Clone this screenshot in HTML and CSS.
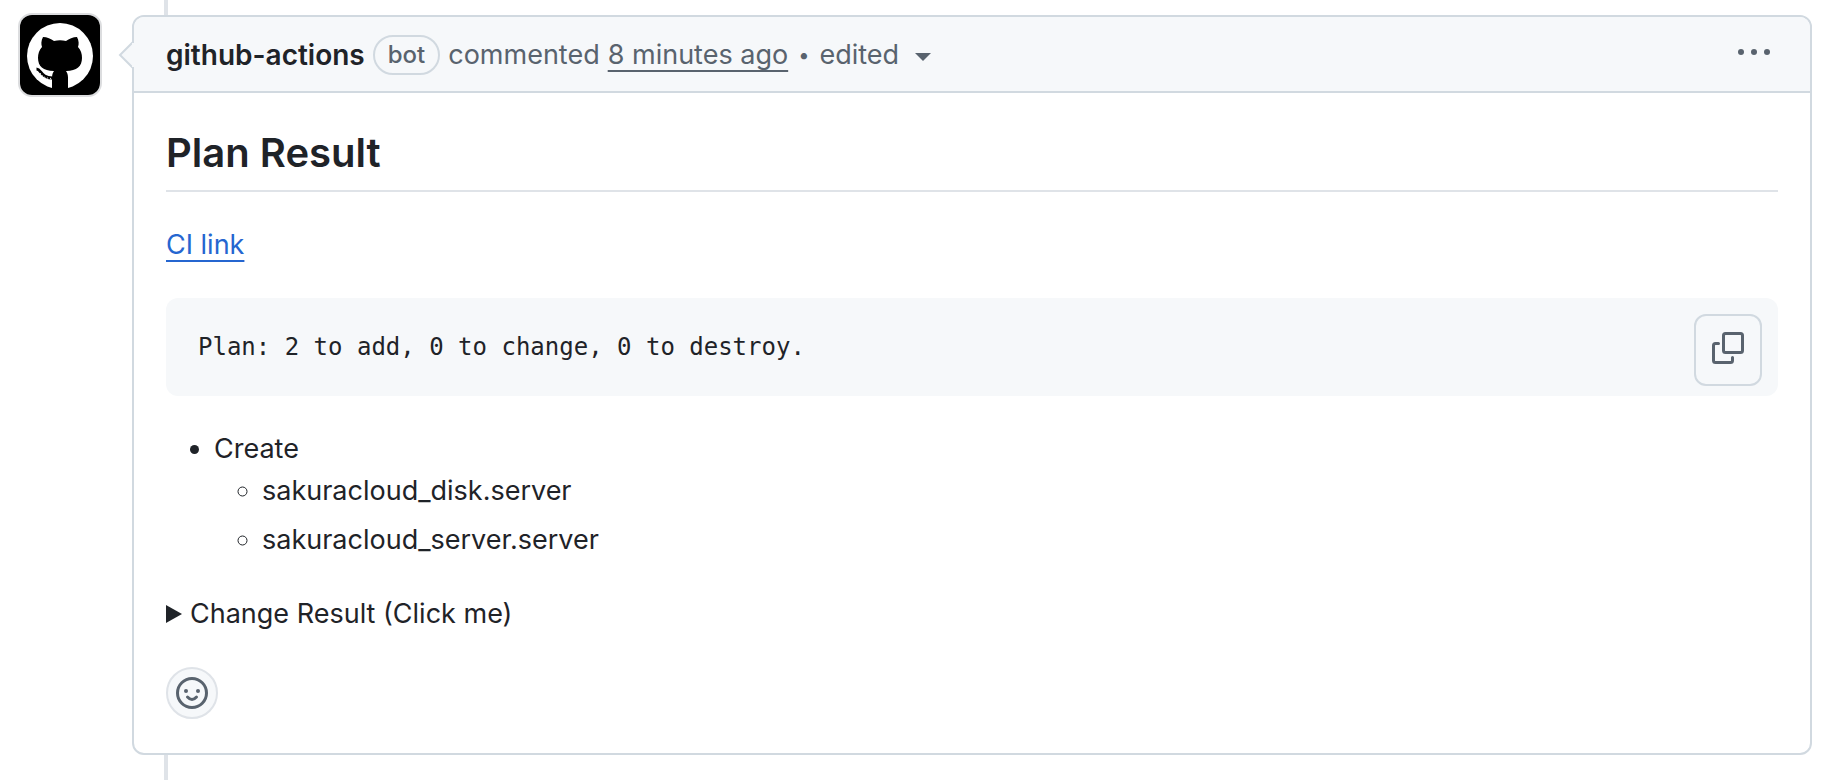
FILE: index.html
```html
<!DOCTYPE html>
<html lang="en">
<head>
<meta charset="utf-8">
<title>Plan Result</title>
<link rel="stylesheet" href="styles.css">
</head>
<body>
<main class="timeline-item">
  <a class="avatar" href="#" aria-label="github-actions">
    <svg viewBox="0 0 80 80" aria-hidden="true">
      <rect width="80" height="80" fill="#000"/>
      <circle cx="40" cy="41" r="33" fill="#fff"/>
      <path fill="#000" d="M23 22c4 0 8 2 11 4 4-1 8-1 12 0 3-2 7-4 11-4 2 4 2 7 1 10 3 3 4 7 4 11 0 8-5 13-16 13 2 3 2 5 2 8v11H32V64c0-3 0-5 2-8-11 0-16-5-16-13 0-4 1-8 4-11-1-3-1-6 1-10z"/>
      <path fill="none" stroke="#000" stroke-width="3" d="M16.500 54c5 0 4 9 16 9"/>
      <path fill="none" stroke="#fff" stroke-width="1" stroke-dasharray="1 2" d="M20 58c3 4 5 5 12 5.500"/>
    </svg>
  </a>
  <div class="thread">
    <article class="comment">
      <svg class="pointer" viewBox="0 0 16 28" aria-hidden="true">
        <path d="M15 1 2 14l13 13z" fill="#f6f8fa"/>
        <path d="M15 0v1L2 14l13 13v1" fill="none" stroke="#d1d9e0" stroke-width="2"/>
        <path d="M14 2h2v24h-2z" fill="#f6f8fa"/>
      </svg>
      <header class="comment-header">
        <a class="author" href="#">github-actions</a>
        <span class="label">bot</span>
        <span class="action">commented</span>
        <a class="time" href="#">8 minutes ago</a>
        <span class="dot">•</span>
        <button class="edited" type="button">edited
          <svg class="caret" viewBox="0 0 16 8" aria-hidden="true"><path d="M0 0h16L8 8z"/></svg>
        </button>
        <button class="menu" type="button" aria-label="Show options">
          <svg viewBox="0 0 32 6" aria-hidden="true"><circle cx="3" cy="3" r="3"/><circle cx="16" cy="3" r="3"/><circle cx="29" cy="3" r="3"/></svg>
        </button>
      </header>
      <div class="comment-body">
        <h2 class="title">Plan Result</h2>
        <p class="paragraph"><a class="link" href="#">CI link</a></p>
        <div class="snippet">
          <pre class="code"><code>Plan: 2 to add, 0 to change, 0 to destroy.</code></pre>
          <button class="copy" type="button" aria-label="Copy">
            <svg viewBox="0 0 32 32" aria-hidden="true" fill="none" stroke="currentColor" stroke-width="3" stroke-linecap="round" stroke-linejoin="round"><rect x="11.500" y="1.500" width="19" height="19" rx="2"/><path d="M6.500 11.500h-3a2 2 0 0 0-2 2v15a2 2 0 0 0 2 2h15a2 2 0 0 0 2-2v-3"/></svg>
          </button>
        </div>
        <ul class="list">
          <li>Create
            <ul class="sublist">
              <li>sakuracloud_disk.server</li>
              <li>sakuracloud_server.server</li>
            </ul>
          </li>
        </ul>
        <details class="details"><summary class="summary">Change Result (Click me)</summary></details>
        <button class="react" type="button" aria-label="Add reaction">
          <svg viewBox="0 0 32 32" aria-hidden="true"><circle cx="16" cy="16" r="14.500" fill="none" stroke="currentColor" stroke-width="3"/><circle cx="10" cy="14" r="2" fill="currentColor"/><circle cx="22" cy="14" r="2" fill="currentColor"/><path d="M11.500 20q4.500 5 9 0" fill="none" stroke="currentColor" stroke-width="3" stroke-linecap="round"/></svg>
        </button>
      </div>
    </article>
  </div>
</main>
</body>
</html>
```
FILE: styles.css
```css
* { box-sizing: border-box; }
body {
  margin: 0;
  background: #fff;
  color: #1f2328;
  font: 27px/42px Inter, "Open Sans", sans-serif;
}
button { padding: 0; border: 0; background: none; color: inherit; font: inherit; cursor: pointer; }
svg { display: block; }

.timeline-item { display: flex; align-items: flex-start; gap: 30px; min-height: 100vh; padding: 0 22px 0 18px; }
.avatar { flex: none; width: 84px; margin-top: 13px; border: 2px solid #dcdddf; border-radius: 14px; overflow: hidden; }

.thread {
  flex: 1;
  min-width: 0;
  min-height: 100vh;
  padding: 15px 0 26px;
  background: linear-gradient(#dfe3e8, #dfe3e8) 32px 0 / 4px 100% no-repeat;
}
.comment { position: relative; border: 2px solid #d1d9e0; border-radius: 12px; background: #fff; }
.pointer { position: absolute; top: 24px; left: -16px; width: 16px; height: 28px; }

.comment-header {
  display: flex;
  align-items: center;
  gap: 8px;
  min-height: 76px;
  padding: 2px 32px 0;
  border-bottom: 2px solid #d1d9e0;
  border-radius: 10px 10px 0 0;
  background: #f6f8fa;
  color: #59636e;
}
.author { color: #1f2328; font-size: 28px; font-weight: 600; text-decoration: none; }
.label { padding: 0 13px; border: 2px solid #d1d9e0; border-radius: 20px; font-size: 24px; font-weight: 500; line-height: 36px; }
.time, .link { text-decoration: underline; text-decoration-thickness: 2px; text-underline-offset: 6px; }
.time { color: inherit; }
.dot { padding: 0 2px; font-size: 20px; }
.edited { display: flex; align-items: center; gap: 16px; }
.caret { width: 16px; height: 8px; margin-top: 4px; fill: currentColor; }
.menu { margin-left: auto; padding: 12px 8px 18px; }
.menu svg { width: 32px; height: 6px; fill: currentColor; }

.comment-body { padding: 32px 32px 34px; }
.title { margin: 0 0 32px; padding-bottom: 10px; border-bottom: 2px solid #dfe3e8; font-size: 40px; font-weight: 600; line-height: 55px; }
.paragraph { margin: 0 0 32px; }
.link { color: #2566d0; }

.snippet { display: flex; align-items: flex-start; justify-content: space-between; margin-bottom: 32px; padding-right: 16px; border-radius: 12px; background: #f6f8fa; }
.code { margin: 0; padding: 32px; font: 24px/34px "DejaVu Sans Mono", monospace; }
.code code { font: inherit; }
.copy { display: grid; place-items: center; width: 68px; height: 72px; margin-top: 16px; padding-bottom: 4px; border: 2px solid #d1d9e0; border-radius: 12px; color: #59636e; }
.copy svg, .react svg { width: 32px; height: 32px; }

.list { margin: 0 0 32px; padding-left: 48px; }
.sublist { margin: 0; padding-left: 48px; }
.sublist li + li { margin-top: 7px; }
.details { margin-bottom: 32px; }
.summary { display: flex; align-items: center; gap: 8px; cursor: pointer; }
.summary::before { content: ""; width: 16px; height: 18px; background: currentColor; clip-path: polygon(0 0, 100% 50%, 0 100%); }
.react { display: grid; place-items: center; width: 52px; height: 52px; border: 2px solid #dfe3e8; border-radius: 50%; background: #f6f8fa; color: #59636e; }
```
